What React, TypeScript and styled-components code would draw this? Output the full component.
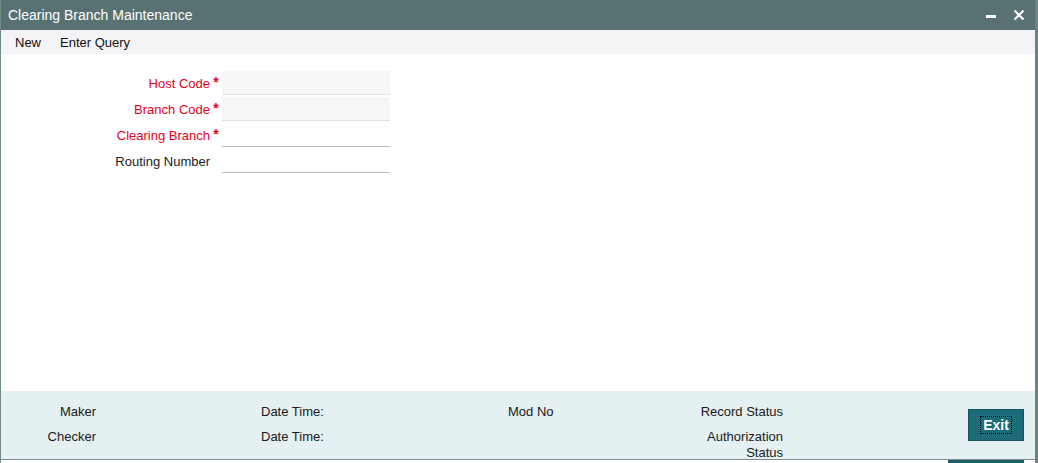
import styled, { createGlobalStyle } from 'styled-components';

const GlobalStyle = createGlobalStyle`
  html, body {
    margin: 0;
    padding: 0;
    background: #ffffff;
  }
  body {
    font-family: 'Liberation Sans', Arial, sans-serif;
    color: #1a1a1a;
  }
`;

const Window = styled.div`
  width: 1038px;
  height: 463px;
  box-sizing: border-box;
  display: flex;
  flex-direction: column;
  border-left: 1px solid #71898a;
  border-right: 3px solid #6c8283;
  overflow: hidden;
`;

const TitleBar = styled.div`
  height: 30px;
  flex-shrink: 0;
  background: #587172;
  color: #ffffff;
  display: flex;
  align-items: center;
  justify-content: space-between;
  padding: 0 10px 0 7px;
  font-size: 14px;
`;

const WinButtons = styled.div`
  display: flex;
  align-items: center;
  gap: 16px;
`;

const MenuBar = styled.div`
  height: 24px;
  flex-shrink: 0;
  background: #f4f4f6;
  display: flex;
  align-items: center;
  gap: 19px;
  padding: 1px 14px 0;
  box-sizing: border-box;
  font-size: 13px;
  color: #111;
`;

const Content = styled.div`
  flex: 1;
  padding: 17px 0 0;
  display: flex;
  flex-direction: column;
  gap: 2px;
`;

const FieldRow = styled.div`
  display: flex;
  align-items: center;
  height: 24px;
`;

const Label = styled.div<{ $required?: boolean }>`
  width: 209px;
  text-align: right;
  font-size: 13px;
  padding-top: 1px;
  color: ${(p) => (p.$required ? '#e8001c' : '#1a1a1a')};
`;

const Star = styled.span<{ $show: boolean }>`
  width: 12px;
  text-align: center;
  color: #e8001c;
  font-size: 14px;
  font-weight: bold;
  visibility: ${(p) => (p.$show ? 'visible' : 'hidden')};
  align-self: flex-start;
  margin-top: 3px;
`;

const Input = styled.div<{ $disabled?: boolean }>`
  width: 168px;
  height: 23px;
  background: ${(p) => (p.$disabled ? '#f6f6f6' : '#ffffff')};
  border-bottom: 1px solid ${(p) => (p.$disabled ? '#e2e2e2' : '#bcbcbc')};
`;

const Footer = styled.div`
  height: 69px;
  flex-shrink: 0;
  background: #e4f0f2;
  border-bottom: 1px solid #7c8e90;
  display: grid;
  grid-template-columns: 95px 165px 247px 100px 175px 1fr;
  grid-template-rows: 25px 1fr;
  padding-top: 13px;
  box-sizing: border-box;
  font-size: 13px;
  color: #1a1a1a;
  position: relative;
`;

const FootLabel = styled.div<{ $align?: string; $col: number; $row: number }>`
  grid-column: ${(p) => p.$col};
  grid-row: ${(p) => p.$row};
  text-align: ${(p) => p.$align || 'left'};
  line-height: 16px;
`;

const ExitButton = styled.button`
  position: absolute;
  right: 11px;
  top: 18px;
  width: 56px;
  height: 32px;
  background: #1c6b78;
  border: 1px solid #15525c;
  color: #ffffff;
  font-family: 'Liberation Sans', Arial, sans-serif;
  font-weight: bold;
  font-size: 14px;
  padding: 0;
  display: flex;
  align-items: center;
  justify-content: center;
  span {
    outline: 1px dotted #000;
    padding: 0 2px;
    line-height: 16px;
  }
`;

const BottomStrip = styled.div`
  height: 3px;
  flex-shrink: 0;
  display: flex;
  justify-content: flex-end;
  padding-right: 11px;
  div {
    width: 76px;
    background: #1c5f68;
  }
`;

const fields = [
  { label: 'Host Code', required: true, disabled: true },
  { label: 'Branch Code', required: true, disabled: true },
  { label: 'Clearing Branch', required: true, disabled: false },
  { label: 'Routing Number', required: false, disabled: false },
];

function App() {
  return (
    <>
      <GlobalStyle />
      <Window>
        <TitleBar>
          <span>Clearing Branch Maintenance</span>
          <WinButtons>
            <svg width="11" height="11" viewBox="0 0 11 11">
              <rect x="0" y="5" width="10" height="3" fill="#fff" />
            </svg>
            <svg width="12" height="12" viewBox="0 0 12 12">
              <path d="M1.5 1.5 L10.5 10.5 M10.5 1.5 L1.5 10.5" stroke="#fff" strokeWidth="2.2" />
            </svg>
          </WinButtons>
        </TitleBar>
        <MenuBar>
          <span>New</span>
          <span>Enter Query</span>
        </MenuBar>
        <Content>
          {fields.map((f) => (
            <FieldRow key={f.label}>
              <Label $required={f.required}>{f.label}</Label>
              <Star $show={f.required}>*</Star>
              <Input $disabled={f.disabled} />
            </FieldRow>
          ))}
        </Content>
        <Footer>
          <FootLabel $col={1} $row={1} $align="right">Maker</FootLabel>
          <FootLabel $col={1} $row={2} $align="right">Checker</FootLabel>
          <FootLabel $col={3} $row={1}>Date Time:</FootLabel>
          <FootLabel $col={3} $row={2}>Date Time:</FootLabel>
          <FootLabel $col={4} $row={1}>Mod No</FootLabel>
          <FootLabel $col={5} $row={1} $align="right">Record Status</FootLabel>
          <FootLabel $col={5} $row={2} $align="right">
            Authorization
            <br />
            Status
          </FootLabel>
          <ExitButton>
            <span>Exit</span>
          </ExitButton>
        </Footer>
        <BottomStrip>
          <div />
        </BottomStrip>
      </Window>
    </>
  );
}

export default App;
